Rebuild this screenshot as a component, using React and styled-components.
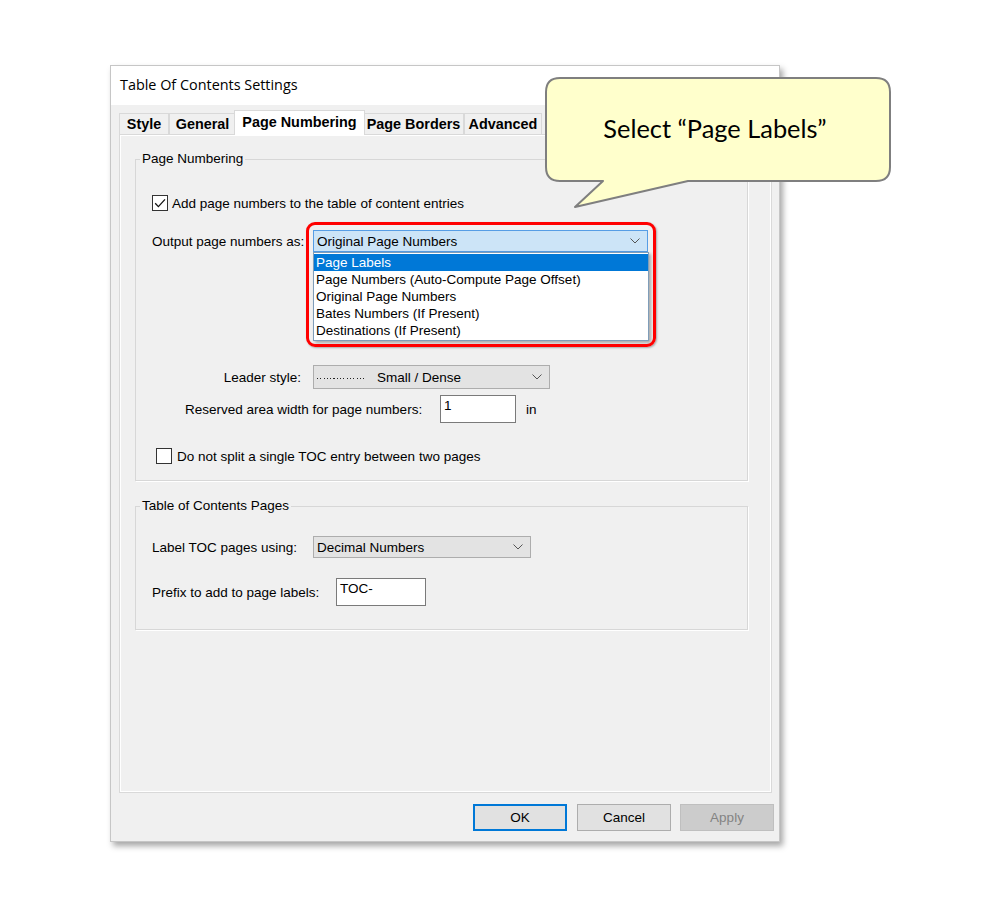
import styled, { createGlobalStyle } from "styled-components";

const GlobalStyle = createGlobalStyle`
  html, body {
    margin: 0;
    padding: 0;
    background: #ffffff;
  }
  body {
    font-family: "Liberation Sans", Arial, sans-serif;
    font-size: 13.5px;
    color: #000;
  }
`;

const Stage = styled.div`
  position: relative;
  width: 1000px;
  height: 907px;
  box-sizing: border-box;
  padding: 65px 0 0 110px;
  overflow: hidden;
`;

const Dialog = styled.div`
  width: 670px;
  height: 777px;
  box-sizing: border-box;
  border: 1px solid #c6c6c6;
  background: #f0f0f0;
  box-shadow: 3px 4px 6px rgba(0, 0, 0, 0.35);
  display: flex;
  flex-direction: column;
`;

const TitleBar = styled.div`
  height: 39px;
  flex-shrink: 0;
  background: #ffffff;
  display: flex;
  align-items: center;
  padding: 0 0 2px 9px;
  box-sizing: border-box;
  font-family: "Open Sans", "Liberation Sans", sans-serif;
  font-size: 14.4px;
`;

const Body = styled.div`
  flex: 1;
  padding: 5px 7px 0 8px;
  display: flex;
  flex-direction: column;
`;

const TabStrip = styled.div`
  display: flex;
  align-items: flex-end;
  height: 25px;
  margin-bottom: -1px;
  position: relative;
  z-index: 1;
`;

const Tab = styled.div`
  box-sizing: border-box;
  width: ${(p) => p.$w}px;
  height: ${(p) => (p.$active ? "25px" : "21px")};
  margin: ${(p) => (p.$active ? "0 -2px" : "0 0 1px 0")};
  border: 1px solid #d9d9d9;
  border-bottom: none;
  background: ${(p) => (p.$active ? "#ffffff" : "#f0f0f0")};
  font-weight: bold;
  font-size: 14.4px;
  display: flex;
  align-items: center;
  justify-content: center;
  white-space: nowrap;
  padding-bottom: ${(p) => (p.$active ? "3px" : "0")};
  position: relative;
  z-index: ${(p) => (p.$active ? 2 : 1)};
`;

const Panel = styled.div`
  height: 659px;
  box-sizing: border-box;
  border: 1px solid #d9d9d9;
  box-shadow: inset 0 0 0 1px #ffffff;
  padding: 16px 23px 0 15px;
  display: flex;
  flex-direction: column;
`;

const Group = styled.fieldset`
  margin: ${(p) => p.$mt || 0}px 0 0 0;
  padding: 0;
  border: 1px solid #d7d7d7;
  box-shadow: 1px 1px 0 #ffffff;
  min-inline-size: 0;
`;

const Legend = styled.legend`
  margin-left: 4px;
  padding: 0 2px;
  line-height: 16px;
`;

const GroupContent = styled.div`
  display: flex;
  flex-direction: column;
  padding: 0 0 ${(p) => p.$pb}px 16px;
`;

const Row = styled.div`
  display: flex;
  align-items: center;
  height: ${(p) => p.$h}px;
  margin-top: ${(p) => p.$mt}px;
  padding-left: ${(p) => p.$indent || 0}px;
`;

const Label = styled.span`
  width: ${(p) => p.$w}px;
  flex-shrink: 0;
  text-align: ${(p) => p.$align || "left"};
  padding-right: ${(p) => p.$pr || 0}px;
  box-sizing: border-box;
  white-space: nowrap;
`;

const CheckBox = styled.span`
  width: 16px;
  height: 16px;
  box-sizing: border-box;
  border: 1px solid #333333;
  background: #ffffff;
  margin-right: ${(p) => p.$gap}px;
  display: flex;
  align-items: center;
  justify-content: center;
  flex-shrink: 0;
`;

const SelectAnchor = styled.div`
  position: relative;
`;

const Select = styled.div`
  width: ${(p) => p.$w}px;
  height: ${(p) => p.$h}px;
  box-sizing: border-box;
  border: 1px solid ${(p) => (p.$active ? "#569de5" : "#adadad")};
  background: ${(p) => (p.$active ? "#cce4f7" : "#e3e3e3")};
  display: flex;
  align-items: center;
  justify-content: space-between;
  padding: 0 7px 0 3px;
  white-space: nowrap;
`;

const SelectValue = styled.span`
  display: flex;
  align-items: center;
`;

const LeaderDots = styled.span`
  width: 49px;
  height: 1px;
  margin: 2px 11px 0 0;
  background: repeating-linear-gradient(90deg, #222 0 1px, transparent 1px 3.3px);
`;

const Highlight = styled.div`
  position: absolute;
  left: -7px;
  top: -8px;
  width: 350px;
  height: 125px;
  box-sizing: border-box;
  border: 3px solid #ff0000;
  border-radius: 9px;
  box-shadow: 1px 1px 2px rgba(0, 0, 0, 0.3);
  pointer-events: none;
  z-index: 4;
`;

const DropList = styled.div`
  position: absolute;
  left: 0;
  top: 22px;
  width: 336px;
  box-sizing: border-box;
  border: 1px solid #7f9db9;
  background: #ffffff;
  padding: 1px 0;
  box-shadow: 2px 2px 3px rgba(0, 0, 0, 0.3);
  z-index: 3;
`;

const DropItem = styled.div`
  height: 17px;
  line-height: 17px;
  padding-left: 2px;
  white-space: nowrap;
  background: ${(p) => (p.$selected ? "#0078d7" : "transparent")};
  color: ${(p) => (p.$selected ? "#ffffff" : "#000000")};
`;

const TextBox = styled.div`
  width: ${(p) => p.$w}px;
  height: 28px;
  box-sizing: border-box;
  border: 1px solid #7a7a7a;
  background: #ffffff;
  padding: 2px 3px;
  line-height: 16px;
  align-self: center;
`;

const Unit = styled.span`
  margin-left: 10px;
`;

const ButtonRow = styled.div`
  display: flex;
  justify-content: flex-end;
  gap: 10px;
  margin: 11px -2px 0 0;
`;

const Button = styled.div`
  width: 94px;
  height: 27px;
  box-sizing: border-box;
  display: flex;
  align-items: center;
  justify-content: center;
  border: ${(p) => (p.$primary ? "2px solid #0078d7" : `1px solid ${p.$disabled ? "#bfbfbf" : "#adadad"}`)};
  background: ${(p) => (p.$disabled ? "#cccccc" : "#e1e1e1")};
  color: ${(p) => (p.$disabled ? "#838383" : "#000000")};
  margin-left: ${(p) => p.$ml || 0}px;
`;

const Callout = styled.div`
  position: absolute;
  left: 545px;
  top: 77px;
  width: 346px;
  height: 132px;
  z-index: 5;
`;

const CalloutShape = styled.svg`
  position: absolute;
  inset: 0;
`;

const CalloutText = styled.div`
  position: relative;
  height: 105px;
  display: flex;
  align-items: center;
  justify-content: center;
  padding: 0 6px 4px 0;
  box-sizing: border-box;
  font-family: Lato, "Open Sans", sans-serif;
  font-size: 25.4px;
  color: #000;
`;

const Chevron = () => (
  <svg width="10" height="6" viewBox="0 0 10 6">
    <path d="M0.5 0.5 L5 5 L9.5 0.5" fill="none" stroke="#555" strokeWidth="1" />
  </svg>
);

const Check = () => (
  <svg width="14" height="14" viewBox="0 0 14 14">
    <path d="M2.2 7.2 L5.4 10.6 L12 3.4" fill="none" stroke="#111" strokeWidth="1.3" />
  </svg>
);

const tabs = [
  { name: "Style", w: 50 },
  { name: "General", w: 67 },
  { name: "Page Numbering", w: 131, active: true },
  { name: "Page Borders", w: 101 },
  { name: "Advanced", w: 78 },
];

const options = [
  "Page Labels",
  "Page Numbers (Auto-Compute Page Offset)",
  "Original Page Numbers",
  "Bates Numbers (If Present)",
  "Destinations (If Present)",
];

export default function App() {
  return (
    <Stage>
      <GlobalStyle />
      <Dialog>
        <TitleBar>Table Of Contents Settings</TitleBar>
        <Body>
          <TabStrip>
            {tabs.map((t) => (
              <Tab key={t.name} $w={t.w} $active={t.active}>
                {t.name}
              </Tab>
            ))}
          </TabStrip>
          <Panel>
            <Group>
              <Legend>Page Numbering</Legend>
              <GroupContent $pb={14}>
                <Row $mt={26} $h={20}>
                  <CheckBox $gap={4}>
                    <Check />
                  </CheckBox>
                  Add page numbers to the table of content entries
                </Row>
                <Row $mt={17} $h={22}>
                  <Label $w={161}>Output page numbers as:</Label>
                  <SelectAnchor>
                    <Select $w={335} $h={22} $active>
                      <SelectValue>Original Page Numbers</SelectValue>
                      <Chevron />
                    </Select>
                    <DropList>
                      {options.map((o, i) => (
                        <DropItem key={o} $selected={i === 0}>
                          {o}
                        </DropItem>
                      ))}
                    </DropList>
                    <Highlight />
                  </SelectAnchor>
                </Row>
                <Row $mt={113} $h={24}>
                  <Label $w={161} $align="right" $pr={12}>
                    Leader style:
                  </Label>
                  <Select $w={237} $h={24}>
                    <SelectValue>
                      <LeaderDots />
                      Small / Dense
                    </SelectValue>
                    <Chevron />
                  </Select>
                </Row>
                <Row $mt={6} $h={28} $indent={33}>
                  <Label $w={255}>Reserved area width for page numbers:</Label>
                  <TextBox $w={76}>1</TextBox>
                  <Unit>in</Unit>
                </Row>
                <Row $mt={23} $h={20} $indent={4}>
                  <CheckBox $gap={5} />
                  Do not split a single TOC entry between two pages
                </Row>
              </GroupContent>
            </Group>
            <Group $mt={17}>
              <Legend>Table of Contents Pages</Legend>
              <GroupContent $pb={23}>
                <Row $mt={22} $h={22}>
                  <Label $w={161}>Label TOC pages using:</Label>
                  <Select $w={218} $h={22}>
                    <SelectValue>Decimal Numbers</SelectValue>
                    <Chevron />
                  </Select>
                </Row>
                <Row $mt={20} $h={28}>
                  <Label $w={184}>Prefix to add to page labels:</Label>
                  <TextBox $w={90}>TOC-</TextBox>
                </Row>
              </GroupContent>
            </Group>
          </Panel>
          <ButtonRow>
            <Button $primary>OK</Button>
            <Button>Cancel</Button>
            <Button $disabled $ml={-1}>
              Apply
            </Button>
          </ButtonRow>
        </Body>
      </Dialog>
      <Callout>
        <CalloutShape width="346" height="132" viewBox="0 0 346 132">
          <path
            d="M15 1 H331 Q345 1 345 15 V90 Q345 104 331 104 H143 L30 130 L58 104 H15 Q1 104 1 90 V15 Q1 1 15 1 Z"
            fill="#ffffcc"
            stroke="#7f7f7f"
            strokeWidth="2"
            strokeLinejoin="round"
          />
        </CalloutShape>
        <CalloutText>Select “Page Labels”</CalloutText>
      </Callout>
    </Stage>
  );
}
